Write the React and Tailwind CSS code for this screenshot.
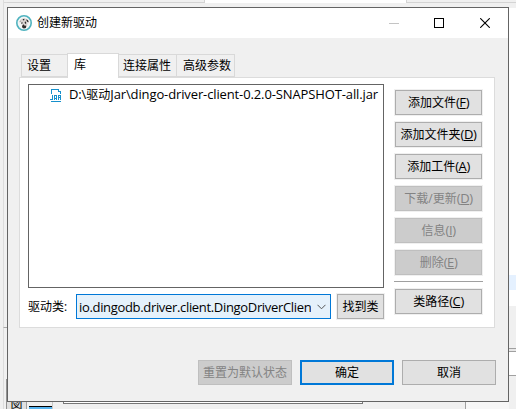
import React from 'react';

const FONT = "font-['Open_Sans','Noto_Sans_CJK_SC',sans-serif]";

function SideButton({ label, hotkey, disabled = false }) {
  return (
    <button
      className={`flex h-[25px] w-[87px] shrink-0 items-center justify-center whitespace-nowrap border pt-px outline outline-[#f0f0f0] ${
        disabled ? 'border-[#bfbfbf] bg-[#cccccc] text-[#838383]' : 'border-[#adadad] bg-[#e1e1e1] text-black'
      }`}
    >
      <span className="leading-[16px]">
        {label}
        <span className="text-[13px] leading-none tracking-[-0.4px]">
          (<span className="underline underline-offset-1">{hotkey}</span>)
        </span>
      </span>
    </button>
  );
}

function Backdrop() {
  return (
    <div className="flex h-full">
      <div className="flex w-[7px] shrink-0 flex-col">
        <div className="ml-[3px] h-[327px] border-l border-[#dcdcdc]">
          <div className="mt-[2px] border-t border-[#d8d8d8]" />
        </div>
        <div className="ml-[3px] h-[52px] border-l border-t border-l-[#dcdcdc] border-t-[#a8a8a8]" />
        <div className="ml-[3px] flex-1 border-l border-[#dcdcdc] pl-[2px]">
          <div className="h-full bg-[#929292]" />
        </div>
      </div>
      <div className="flex min-w-0 flex-1 flex-col justify-between">
        <div className="flex h-[3px]">
          <div className="w-[198px] border-b border-r border-[#d4d4d4]" />
          <div className="w-[201px] bg-white" />
          <div className="flex-1 border-b border-l border-[#d4d4d4]" />
        </div>
        <div className="flex h-[8px] items-start">
          <div className="flex h-full w-[20px] items-start justify-center overflow-hidden border-r border-[#a0a0a0] bg-[#e0e0e0] text-[12px] leading-[10px] text-black">
            <span>図</span>
          </div>
          <div className="ml-[2px] mt-[5px] h-[3px] w-[23px] border-t border-black bg-[#57b4f0]" />
          <div className="h-full w-[1px] bg-[#c8c8c8]" />
          <div className="ml-[10px] h-[3px] w-[300px] border-x border-b border-[#777777] bg-white" />
          <div className="ml-[102px] h-full flex-1 border-l border-[#a0a0a0] bg-[#f7f7f7]" />
        </div>
      </div>
      <div className="flex w-[7px] shrink-0 flex-col">
        <div className="h-[8px] border-t-[2px] border-[#f0f0f0] bg-[#f0f0f0]">
          <div className="h-px bg-[#d4d4d4]" />
        </div>
        <div className="h-[267px] bg-white" />
        <div className="h-[15px] bg-[#e5f1ff]" />
        <div className="h-[16px] bg-white" />
        <div className="h-[42px] bg-[#f0f0f0]" />
        <div className="h-[4px] border-y border-[#a0a0a0] bg-[#e8e8e8]" />
        <div className="h-[24px] border-b border-[#a0a0a0] bg-white" />
        <div className="flex-1 bg-[#f0f0f0]" />
      </div>
    </div>
  );
}

function AppIcon() {
  return (
    <svg className="size-4" viewBox="0 0 16 16">
      <circle cx="8" cy="8" r="7.2" fill="#f4f6f6" stroke="#4fb3bf" strokeWidth="1.6" />
      <path d="M4.2 5.2C5.4 3.2 8.8 2.6 11 4.2c1 .8 1.7 2.2 1.7 3.4l-1.2-.9c.1 2-.2 4.400-1 5.800l-1.500-2-1-.3-1.200 1.600c-.9-.9-1-2.400-.3-3.300l1-1.500-2.700.7z" fill="#d9d4d2" />
      <path d="M10.300 4.300l1.800 1 .6 2-1.200-.4-.9-1.200zM6.700 4.300l1.500-.5.2 1.200-1.300.4zM5.300 7.400l1.200-.3v1.500l-1 .6zM8.600 7l1.300-.4.4 1.700-1.100.7zM6 11l1.600-1.800.8 1.400 1.800.2-.3 2.200-2 .4-1.500-.6z" fill="#302c2b" />
      <path d="M3.600 6.200l.8-1 .3 1.400-.8 1z" fill="#8d8885" />
    </svg>
  );
}

function JarIcon() {
  return (
    <svg className="h-[13px] w-[12px]" viewBox="0 0 12 13" fill="none" stroke="#1690cc" shapeRendering="crispEdges">
      <path d="M1.500 5V.5h7M10.500 3v2M8.500 1v1.500h2M1 12.500h10" />
      <path d="M2.500 6v4.500h-2v-1M4.500 11V6.500h2V11M5 9.500h1M8.500 11V6.500h2v2h-2M10.500 9v2" />
    </svg>
  );
}

function TitleBar() {
  return (
    <div className="flex h-[30px] shrink-0 items-center bg-white pl-2">
      <AppIcon />
      <span className="ml-[5px] text-black">创建新驱动</span>
      <svg className="ml-auto h-[10px] w-[10px]" viewBox="0 0 10 10">
        <path d="M0 5.500h10" stroke="#c4c4c4" shapeRendering="crispEdges" />
      </svg>
      <svg className="ml-[35px] h-[10px] w-[10px]" viewBox="0 0 10 10">
        <path d="M.5.5h9v9h-9z" fill="none" stroke="#000" shapeRendering="crispEdges" />
      </svg>
      <svg className="ml-[36px] mr-[18px] h-[10px] w-[10px]" viewBox="0 0 10 10">
        <path d="M.2.2l9.600 9.600M9.800.2L.2 9.800" stroke="#000" strokeWidth="1.100" />
      </svg>
    </div>
  );
}

function Tabs() {
  return (
    <div className="relative z-10 ml-[13px] mt-[15px] flex h-[25px] items-end text-black">
      <div className="mb-px h-[23px] w-[46px] border border-r-0 border-[#d9d9d9] bg-[#f0f0f0] pl-[5px] leading-[22px]">设置</div>
      <div className="h-[25px] w-[52px] border border-b-0 border-[#d9d9d9] bg-white pl-[6px] leading-[21px]">库</div>
      <div className="mb-px h-[23px] w-[57px] border-b border-t border-[#d9d9d9] bg-[#f0f0f0] pl-[4px] leading-[22px]">连接属性</div>
      <div className="mb-px h-[23px] w-[59px] border border-[#d9d9d9] bg-[#f0f0f0] pl-[6px] leading-[22px]">高级参数</div>
    </div>
  );
}

export default function App() {
  return (
    <div className={`relative h-[409px] w-[516px] overflow-hidden bg-[#f0f0f0] text-[12px] leading-[16px] ${FONT}`}>
      <Backdrop />
      <div className="absolute left-[7px] top-[7px] flex h-[395px] w-[502px] flex-col border border-[#646464] bg-[#f0f0f0]">
        <TitleBar />
        <Tabs />
        <div className="ml-[11px] mt-[-1px] flex h-[251px] w-[476px] shrink-0 border border-[#dcdcdc] bg-white">
          <div className="ml-[8px] mt-[6px] w-[356px] shrink-0 text-black">
            <div className="h-[204px] border border-[#646464]">
              <div className="flex h-[20px] items-center pl-[21px]">
                <JarIcon />
                <span className="mb-[2px] ml-[7px] whitespace-nowrap text-[13px] tracking-[-0.12px]">
                  D:\<span className="text-[12px] tracking-normal">驱动</span>Jar\dingo-driver-client-0.2.0-SNAPSHOT-all.jar
                </span>
              </div>
            </div>
            <div className="mt-[6px] flex h-[25px] items-center">
              <span className="w-[48px] shrink-0">驱动类:</span>
              <div className="flex h-[25px] w-[255px] shrink-0 items-center border border-[#0078d7] bg-[#e5f1fb] pl-[2px] pr-[4px]">
                <span className="w-[232px] overflow-hidden whitespace-nowrap text-[13px] tracking-[-0.33px]">io.dingodb.driver.client.DingoDriverClient</span>
                <svg className="ml-auto h-[6px] w-[9px] shrink-0" viewBox="0 0 9 6" fill="none" stroke="#555">
                  <path d="M.5.800l4 4 4-4" />
                </svg>
              </div>
              <button className="ml-[6px] h-[25px] w-[47px] border border-[#adadad] bg-[#e1e1e1] pt-px outline outline-[#f0f0f0]">找到类</button>
            </div>
          </div>
          <div className="ml-[10px] mt-[12px] flex flex-col items-center">
            <div className="flex flex-col gap-[7px]">
              <SideButton label="添加文件" hotkey="F" />
              <SideButton label="添加文件夹" hotkey="D" />
              <SideButton label="添加工件" hotkey="A" />
              <SideButton label="下载/更新" hotkey="D" disabled />
              <SideButton label="信息" hotkey="I" disabled />
              <SideButton label="删除" hotkey="E" disabled />
            </div>
            <div className="mb-[7px] mt-[6px] h-px w-[89px] shrink-0 bg-[#a0a0a0]" />
            <SideButton label="类路径" hotkey="C" />
          </div>
        </div>
        <div className="mt-[32px] flex pl-[190px] text-black">
          <button className="h-[25px] w-[94px] border border-[#bfbfbf] bg-[#cccccc] text-[#838383]">重置为默认状态</button>
          <button className="ml-[8px] h-[25px] w-[94px] border-2 border-[#0078d7] bg-[#e1e1e1]">确定</button>
          <button className="ml-[8px] h-[25px] w-[94px] border border-[#adadad] bg-[#e1e1e1]">取消</button>
        </div>
      </div>
    </div>
  );
}
